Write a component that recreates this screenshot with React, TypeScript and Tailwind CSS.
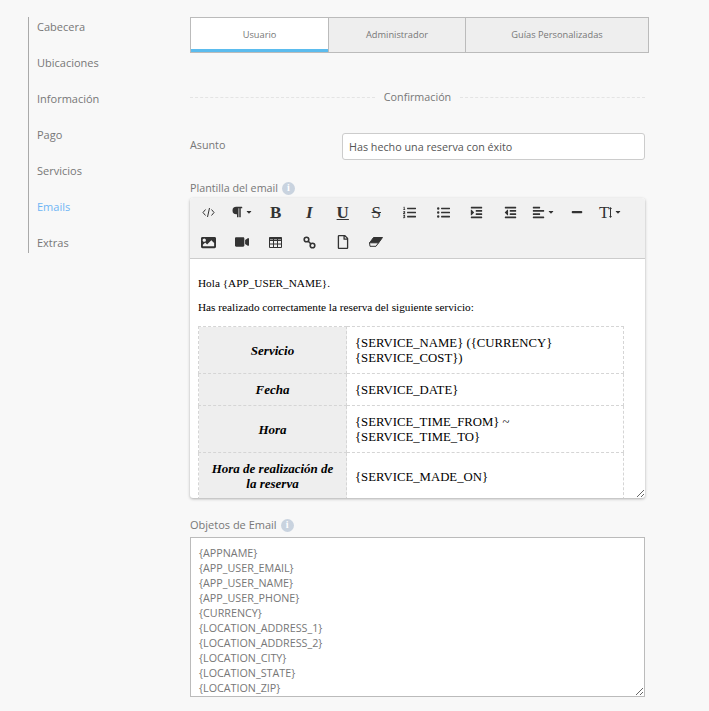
import type { ReactNode } from "react";
import {
  FaParagraph,
  FaListOl,
  FaListUl,
  FaIndent,
  FaOutdent,
  FaAlignLeft,
  FaMinus,
  FaImage,
  FaVideo,
  FaRegFile,
  FaCaretDown,
} from "react-icons/fa";

const sideItems = ["Cabecera", "Ubicaciones", "Información", "Pago", "Servicios", "Emails", "Extras"];

const emailObjects = [
  "{APPNAME}",
  "{APP_USER_EMAIL}",
  "{APP_USER_NAME}",
  "{APP_USER_PHONE}",
  "{CURRENCY}",
  "{LOCATION_ADDRESS_1}",
  "{LOCATION_ADDRESS_2}",
  "{LOCATION_CITY}",
  "{LOCATION_STATE}",
  "{LOCATION_ZIP}",
  "{LOCATION_COUNTRY}",
];

const rows: [ReactNode, ReactNode][] = [
  ["Servicio", "{SERVICE_NAME} ({CURRENCY} {SERVICE_COST})"],
  ["Fecha", "{SERVICE_DATE}"],
  ["Hora", "{SERVICE_TIME_FROM} ~ {SERVICE_TIME_TO}"],
  ["Hora de realización de la reserva", "{SERVICE_MADE_ON}"],
];

function InfoDot() {
  return (
    <span className="ml-[4px] inline-flex h-[13px] w-[13px] items-center justify-center rounded-full bg-[#c9d3df] font-['Liberation_Serif',serif] text-[10px] font-bold leading-none text-white">
      i
    </span>
  );
}

function ToolButton({ children, caret }: { children: ReactNode; caret?: boolean }) {
  return (
    <button className="flex h-[30px] w-[33.5px] items-center justify-center text-[#333]">
      {children}
      {caret && <FaCaretDown className="ml-[2px] text-[8px]" />}
    </button>
  );
}

function CodeIcon() {
  return (
    <svg width="13" height="11" viewBox="0 0 13 11" fill="none" stroke="currentColor" strokeWidth="1">
      <path d="M3.500 2.500L1 5.500l2.500 3M9.500 2.500L12 5.500l-2.500 3M7.500 1L5.500 10" />
    </svg>
  );
}

function TableIcon() {
  return (
    <svg width="13" height="11" viewBox="0 0 13 11" fill="none" stroke="currentColor" strokeWidth="1">
      <path d="M.5.5h12v10H.5zM.5 3.500h12M.5 7h12M4.500.5v10M8.500.5v10" />
      <path d="M.5 1.500h12" strokeWidth="2" />
    </svg>
  );
}

function ChainIcon() {
  return (
    <svg width="13" height="13" viewBox="0 0 13 13" fill="none" stroke="currentColor" strokeWidth="1.600">
      <circle cx="3.500" cy="3.500" r="2.300" />
      <circle cx="9.500" cy="9.500" r="2.300" />
      <path d="M5 5l3 3" />
    </svg>
  );
}

function EraserIcon() {
  return (
    <svg width="14" height="10" viewBox="0 0 14 10" stroke="currentColor" strokeWidth="1">
      <path d="M4.500.5h9L9.500 6h-9z" fill="currentColor" />
      <path d="M.5 6l-0 0h9L7 9.500H1z" fill="#f1f1f1" transform="translate(0 -.2)" />
    </svg>
  );
}

function Toolbar() {
  const serif = "font-['Liberation_Serif',serif] text-[17px] leading-none";
  return (
    <div className="flex flex-wrap rounded-t-[3px] border-b border-[#ccc] bg-[#f1f1f1] pl-[2px]">
      <div className="-mt-[1px] flex flex-wrap pb-[1px]">
        <ToolButton><CodeIcon /></ToolButton>
        <ToolButton caret><FaParagraph className="text-[12px]" /></ToolButton>
        <ToolButton><span className={`${serif} font-bold`}>B</span></ToolButton>
        <ToolButton><span className={`${serif} font-bold italic`}>I</span></ToolButton>
        <ToolButton><span className={`${serif} font-bold underline`}>U</span></ToolButton>
        <ToolButton><span className={`${serif} line-through`}>S</span></ToolButton>
        <ToolButton><FaListOl className="text-[13px]" /></ToolButton>
        <ToolButton><FaListUl className="text-[13px]" /></ToolButton>
        <ToolButton><FaIndent className="text-[13px]" /></ToolButton>
        <ToolButton><FaOutdent className="text-[13px]" /></ToolButton>
        <ToolButton caret><FaAlignLeft className="text-[13px]" /></ToolButton>
        <ToolButton><FaMinus className="text-[12px]" /></ToolButton>
        <ToolButton caret>
          <span className={serif}>T</span>
          <svg width="3" height="11" viewBox="0 0 3 11" fill="currentColor">
            <path d="M1.500 0L3 2H2v7h1l-1.500 2L0 9h1V2H0z" />
          </svg>
        </ToolButton>
        <ToolButton><FaImage className="text-[15px]" /></ToolButton>
        <ToolButton><FaVideo className="text-[14px]" /></ToolButton>
        <ToolButton><TableIcon /></ToolButton>
        <ToolButton><ChainIcon /></ToolButton>
        <ToolButton><FaRegFile className="text-[14px]" /></ToolButton>
        <ToolButton><EraserIcon /></ToolButton>
      </div>
    </div>
  );
}

export default function App() {
  return (
    <div className="flex h-[711px] overflow-hidden bg-[#f8f8f8] pl-[28px] pt-[17px] font-['Open_Sans',sans-serif] text-[#777]">
      <ul className="flex h-[236px] w-[162px] shrink-0 flex-col gap-4 border-l border-[#aaa] pl-2 text-[11px] leading-5">
        {sideItems.map((item) => (
          <li key={item} className={item === "Emails" ? "text-[#6eb5f5]" : ""}>
            {item}
          </li>
        ))}
      </ul>

      <div className="w-[459px] shrink-0">
        <div className="flex h-9 border border-[#bbb] bg-[#eee] text-[9.25px] text-[#777]">
          <div className="flex w-[137px] items-center justify-center border-b-[3px] border-[#5bbcee] bg-white pt-[2px]">
            Usuario
          </div>
          <div className="flex w-[137px] items-center justify-center border-l border-[#bbb]">Administrador</div>
          <div className="flex flex-1 items-center justify-center border-l border-[#bbb]">Guías Personalizadas</div>
        </div>

        <div className="mt-9 flex w-[455px] items-center gap-[9px] text-[10.75px] leading-4">
          <div className="flex-1 border-t border-dashed border-[#e4e4e4]" />
          <span>Confirmación</span>
          <div className="flex-1 border-t border-dashed border-[#e4e4e4]" />
        </div>

        <div className="mt-[28px] flex w-[455px] items-center">
          <label className="mb-[2px] w-[152px] text-[10.75px]">Asunto</label>
          <input
            readOnly
            value="Has hecho una reserva con éxito"
            className="h-[27px] flex-1 rounded-[3px] border border-[#ccc] bg-white px-[6px] pt-[1px] text-[10.75px] text-[#555]"
          />
        </div>

        <div className="mt-[20px] flex h-4 items-center text-[10.75px]">
          Plantilla del email
          <InfoDot />
        </div>

        <div className="mt-[2px] flex h-[300px] w-[455px] resize-y flex-col overflow-hidden rounded-[3px] bg-white shadow-[0_1px_3px_rgba(0,0,0,0.3)]">
          <Toolbar />
          <div className="px-2 pt-[17px] font-['Liberation_Serif',serif] text-[11.25px] leading-[14px] text-black">
            <p>Hola {"{APP_USER_NAME}"}.</p>
            <p className="mt-[10px]">Has realizado correctamente la reserva del siguiente servicio:</p>
            <table className="mt-3 w-[426px] table-fixed border-collapse">
              <tbody>
                {rows.map(([head, value], i) => (
                  <tr key={i}>
                    <th className="w-[148px] border border-dashed border-[#d5d5d5] bg-[#eee] px-2 pb-2 pt-2 text-center text-[13px] font-bold italic leading-[15px]">
                      {head}
                    </th>
                    <td className="border border-dashed border-[#d5d5d5] px-2 pb-[7px] pt-[9px] text-[12.75px] leading-[15px]">{value}</td>
                  </tr>
                ))}
              </tbody>
            </table>
          </div>
        </div>

        <div className="mt-[19px] flex h-4 items-center text-[11px]">
          Objetos de Email
          <InfoDot />
        </div>

        <textarea
          readOnly
          value={emailObjects.join("\n")}
          className="mt-[4px] block h-[160px] w-[455px] resize-y overflow-hidden border border-[#bbb] bg-white px-2 pt-[8px] text-[10.75px] leading-[15px] text-[#777]"
        />
      </div>
    </div>
  );
}
